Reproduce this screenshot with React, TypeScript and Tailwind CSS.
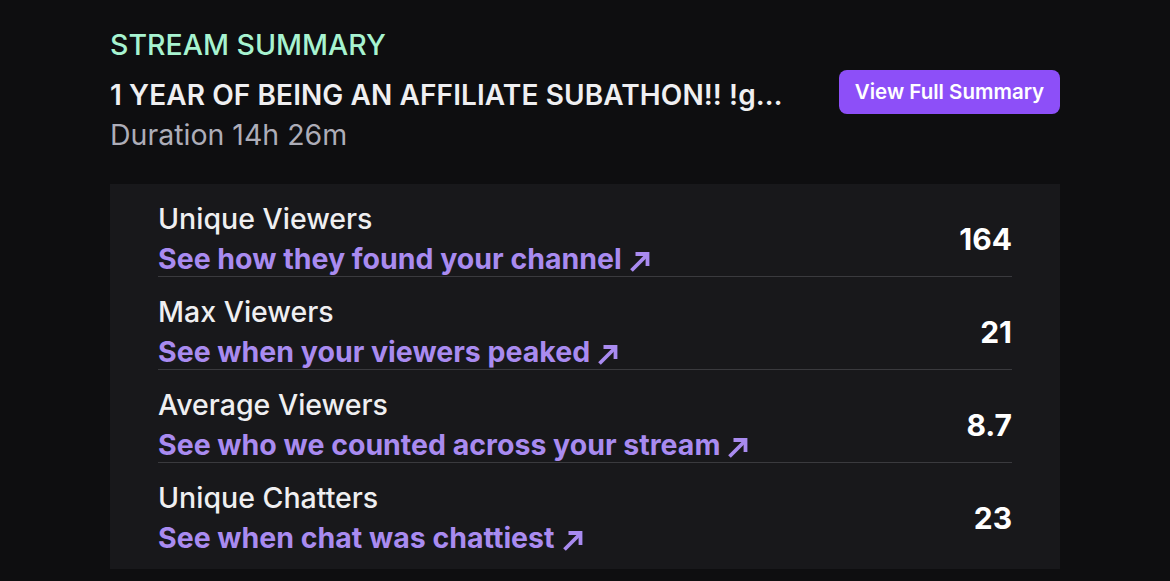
const rows = [
  { label: 'Unique Viewers', link: 'See how they found your channel', value: '164' },
  { label: 'Max Viewers', link: 'See when your viewers peaked', value: '21' },
  { label: 'Average Viewers', link: 'See who we counted across your stream', value: '8.7' },
  { label: 'Unique Chatters', link: 'See when chat was chattiest', value: '23' },
]

function ExternalArrow() {
  return (
    <svg viewBox="0 0 22 22" className="ml-[7px] mt-[3px] h-[22px] w-[22px] shrink-0" fill="none" stroke="currentColor" strokeWidth={3.8}>
      <path d="M2.5 20.5 L18.5 4.5" />
      <path d="M6.5 4 H18.5 V16" strokeLinejoin="miter" />
    </svg>
  )
}

export default function App() {
  return (
    <div className="min-h-[581px] w-full bg-[#0e0e10] px-[110px] pt-[27px] font-['Inter',sans-serif] text-[#efeff1]">
      {/* Header */}
      <div className="flex items-center gap-[53px]">
        <div className="min-w-0 flex-1">
          <div className="text-[28.5px] leading-[36px] font-medium text-[#a7f3d0]">STREAM SUMMARY</div>
          <div className="mt-[14px] truncate text-[28px] leading-[36px] font-semibold tracking-[0.1px]">
            1 YEAR OF BEING AN AFFILIATE SUBATHON!! !goals !socials !discord !merch
          </div>
          <div className="mt-[4px] text-[28.5px] leading-[36px] text-[#adadb8]">Duration 14h 26m</div>
        </div>
        <button className="mt-[4px] h-[44px] w-[221px] shrink-0 rounded-[8px] bg-[#8d4ff8] text-[20.5px] font-semibold text-white">
          View Full Summary
        </button>
      </div>

      {/* Stats panel */}
      <div className="mt-[31px] bg-[#18181b] px-[48px] pb-[14px]">
        {rows.map((r, i) => (
          <div
            key={r.label}
            className={`flex items-center justify-between pt-[17px] ${i < rows.length - 1 ? 'border-b border-[#3a3a3e]' : ''}`}
          >
            <div>
              <div className="text-[28.5px] leading-[36px] font-medium text-[#efeff1]">{r.label}</div>
              <div className="mt-[5px] flex items-center text-[28.5px] leading-[34px] font-bold text-[#a98bf0]">
                {r.link}
                <ExternalArrow />
              </div>
            </div>
            <div className="text-[30px] leading-[36px] font-bold text-white">{r.value}</div>
          </div>
        ))}
      </div>
    </div>
  )
}
